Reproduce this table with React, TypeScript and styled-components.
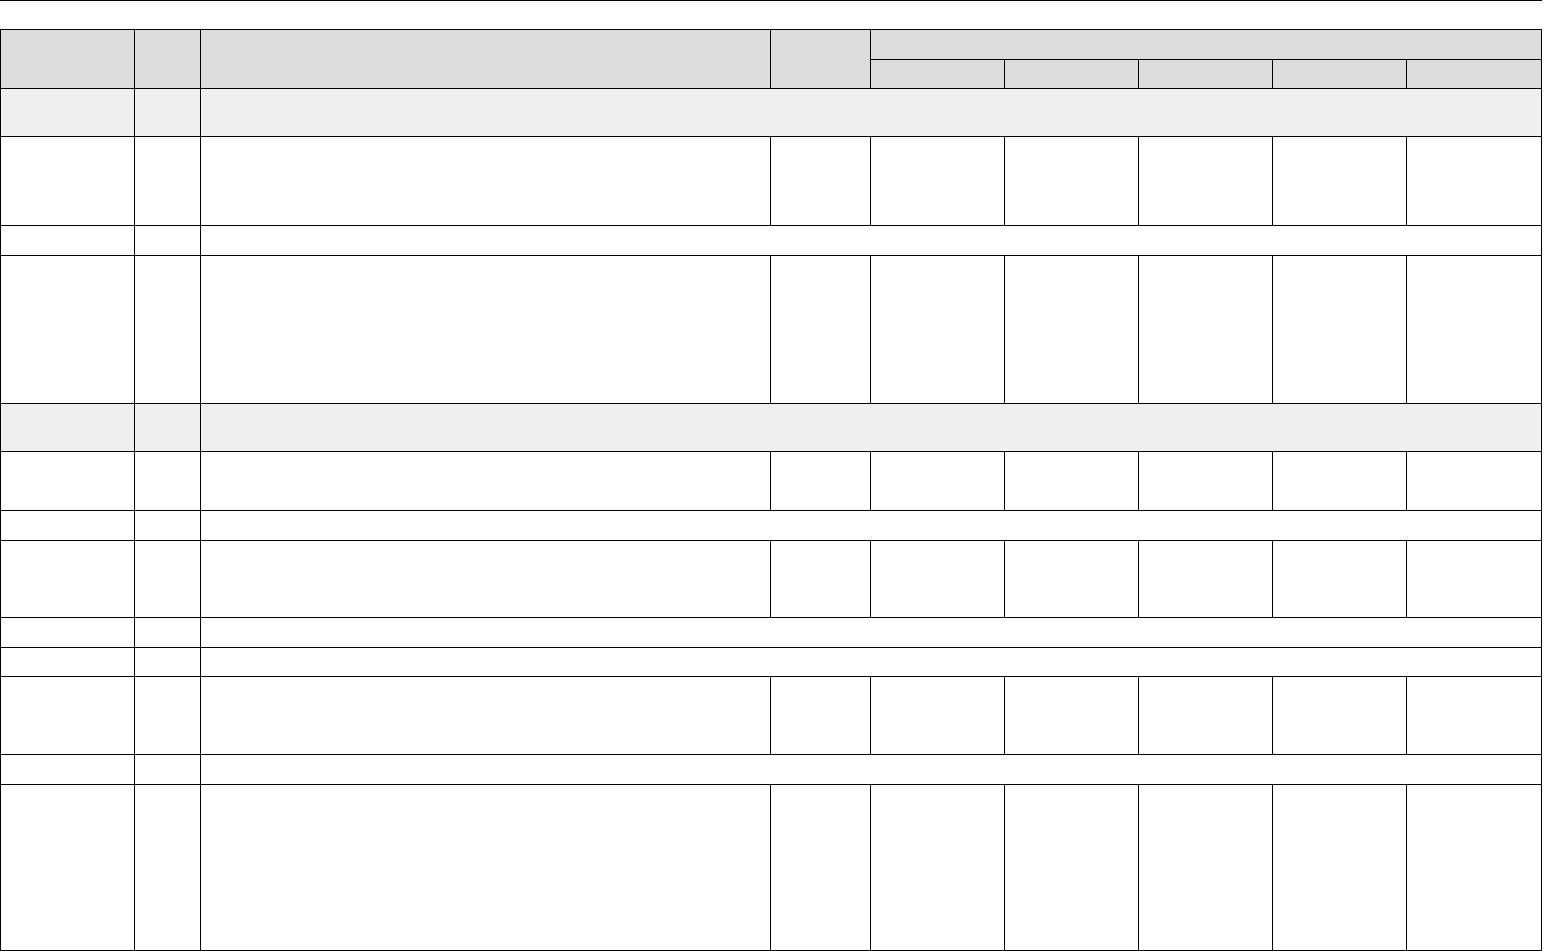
import styled, { createGlobalStyle } from "styled-components"

const GlobalStyle = createGlobalStyle`
  html, body {
    margin: 0;
    padding: 0;
    background: #ffffff;
    font-family: "Liberation Sans", Arial, sans-serif;
    font-size: 13px;
  }
`

const TopRule = styled.div`
  width: 1542px;
  height: 0;
  border-top: 1px solid #000;
  margin-bottom: 28px;
`

const Grid = styled.table`
  border-collapse: collapse;
  table-layout: fixed;
  width: 1541px;
`

const HeadCell = styled.th`
  background: #dcdcdc;
  border: 1px solid #000;
  padding: 0;
  font-weight: normal;
`

const Cell = styled.td<{ $section?: boolean }>`
  border: 1px solid #000;
  padding: 0;
  background: ${(p) => (p.$section ? "#efefef" : "#ffffff")};
`

const Row = styled.tr<{ $h: number }>`
  height: ${(p) => p.$h}px;
`

const widths = [134, 66, 570, 100, 134, 134, 134, 134, 135]

// kind: "section" = grey full-width row, "sep" = thin merged row, "data" = all cells
const rows: { kind: "section" | "sep" | "data"; h: number }[] = [
  { kind: "section", h: 48 },
  { kind: "data", h: 89 },
  { kind: "sep", h: 30 },
  { kind: "data", h: 148 },
  { kind: "section", h: 48 },
  { kind: "data", h: 59 },
  { kind: "sep", h: 30 },
  { kind: "data", h: 77 },
  { kind: "sep", h: 30 },
  { kind: "sep", h: 29 },
  { kind: "data", h: 78 },
  { kind: "sep", h: 30 },
  { kind: "data", h: 166 },
]

const App = () => {
  return (
    <>
      <GlobalStyle />
      <TopRule />
      <Grid>
        <colgroup>
          {widths.map((w, i) => (
            <col key={i} style={{ width: w }} />
          ))}
        </colgroup>
        <thead>
          <Row $h={30}>
            <HeadCell rowSpan={2}></HeadCell>
            <HeadCell rowSpan={2}></HeadCell>
            <HeadCell rowSpan={2}></HeadCell>
            <HeadCell rowSpan={2}></HeadCell>
            <HeadCell colSpan={5}></HeadCell>
          </Row>
          <Row $h={29}>
            <HeadCell></HeadCell>
            <HeadCell></HeadCell>
            <HeadCell></HeadCell>
            <HeadCell></HeadCell>
            <HeadCell></HeadCell>
          </Row>
        </thead>
        <tbody>
          {rows.map((r, i) => (
            <Row key={i} $h={r.h}>
              {r.kind === "data" ? (
                widths.map((_, j) => <Cell key={j}></Cell>)
              ) : (
                <>
                  <Cell $section={r.kind === "section"}></Cell>
                  <Cell $section={r.kind === "section"}></Cell>
                  <Cell $section={r.kind === "section"} colSpan={7}></Cell>
                </>
              )}
            </Row>
          ))}
        </tbody>
      </Grid>
    </>
  )
}

export default App
